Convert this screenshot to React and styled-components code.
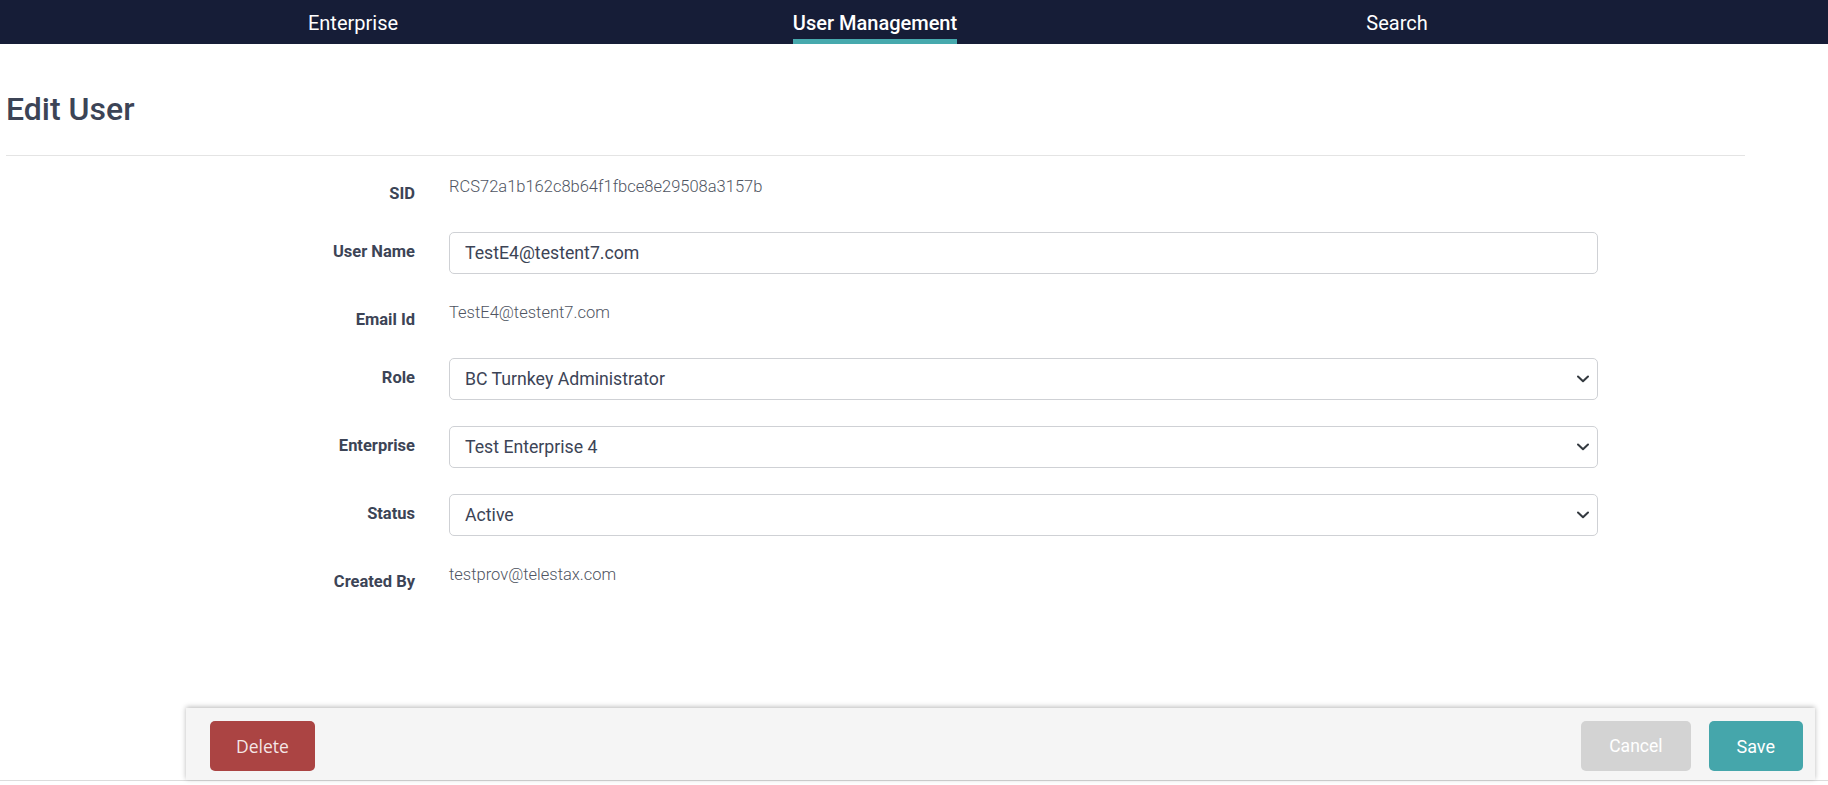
import React from 'react';
import styled, { createGlobalStyle } from 'styled-components';

const GlobalStyle = createGlobalStyle`
  html, body { margin: 0; padding: 0; background: #fff; }
  body { font-family: Roboto, "Liberation Sans", Arial, sans-serif; }
  *, *::before, *::after { box-sizing: border-box; }
`;

const Page = styled.div`
  min-height: 100vh;
  display: flex;
  flex-direction: column;
`;

const NavBar = styled.nav`
  height: 44px;
  background: #161d37;
`;

const NavInner = styled.div`
  width: 1750px;
  height: 100%;
  display: grid;
  grid-template-columns: repeat(3, 522px);
  justify-content: center;
`;

const NavCell = styled.div`
  display: flex;
  justify-content: center;
`;

const NavLink = styled.a`
  display: block;
  height: 44px;
  padding-top: 11px;
  line-height: 24px;
  font-size: 20px;
  font-weight: ${p => (p.$active ? 500 : 400)};
  color: #fff;
  text-decoration: none;
  white-space: nowrap;
  border-bottom: 5px solid ${p => (p.$active ? '#46a9ad' : 'transparent')};
`;

const Main = styled.main`
  margin-left: 6px;
  width: 1739px;
`;

const Title = styled.h1`
  margin: 46px 0 0;
  padding-left: 0;
  font-size: 32px;
  line-height: 38px;
  font-weight: 500;
  color: #3c4456;
`;

const Divider = styled.hr`
  margin: 27px 0 0;
  border: 0;
  border-top: 1px solid #e4e4e4;
`;

const Form = styled.div`
  display: flex;
  flex-direction: column;
  gap: 26px;
  margin-top: 18px;
`;

const Row = styled.div`
  display: grid;
  grid-template-columns: 409px 1149px;
  column-gap: 34px;
  min-height: ${p => (p.$static ? 32 : 42)}px;
`;

const Label = styled.label`
  text-align: right;
  font-weight: 700;
  font-size: 16.5px;
  line-height: 20px;
  padding-top: 10px;
  color: #3c4456;
`;

const StaticValue = styled.div`
  font-size: 16.5px;
  line-height: 20px;
  padding-top: 3px;
  font-weight: 300;
  color: #4f5562;
`;

const fieldBase = `
  height: 42px;
  width: 100%;
  border: 1px solid #cfd1d5;
  border-radius: 5px;
  background: #fff;
  font-family: Roboto, "Liberation Sans", Arial, sans-serif;
  font-size: 17.7px;
  font-weight: 400;
  color: #3c4456;
`;

const TextInput = styled.input`
  ${fieldBase}
  padding: 0 15px;
  outline: none;
`;

const SelectBox = styled.div`
  ${fieldBase}
  display: flex;
  align-items: center;
  justify-content: space-between;
  padding: 0 8px 0 15px;
  cursor: pointer;
`;

const Chevron = () => (
  <svg width="12" height="8" viewBox="0 0 12 8" aria-hidden="true">
    <path d="M1 1.5 L6 6.3 L11 1.5" fill="none" stroke="#343a40" strokeWidth="2" strokeLinecap="round" strokeLinejoin="round" />
  </svg>
);

const FooterWrap = styled.footer`
  margin-top: auto;
  padding-bottom: 4px;
`;

const FooterBase = styled.div`
  border-bottom: 1px solid #dcdcdc;
`;

const ActionBar = styled.div`
  margin: 0 13px 0 186px;
  height: 72px;
  background: #f5f5f5;
  box-shadow: 0 -1px 5px rgba(0, 0, 0, 0.28);
  display: flex;
  align-items: flex-start;
  justify-content: space-between;
  padding: 13px 12px 0 24px;
`;

const ButtonGroup = styled.div`
  display: flex;
  gap: 18px;
`;

const Button = styled.button`
  height: 50px;
  padding: 0 ${p => p.$pad || '28px'};
  border: 0;
  border-radius: 5px;
  cursor: pointer;
  background: ${p => p.$bg};
  color: ${p => p.$color || '#fff'};
  font-family: ${p => p.$font || 'Roboto, "Liberation Sans", Arial, sans-serif'};
  font-size: ${p => p.$size || '18px'};
  font-weight: 400;
`;

const rows = [
  { label: 'SID', type: 'static', value: 'RCS72a1b162c8b64f1fbce8e29508a3157b' },
  { label: 'User Name', type: 'input', value: 'TestE4@testent7.com' },
  { label: 'Email Id', type: 'static', value: 'TestE4@testent7.com' },
  { label: 'Role', type: 'select', value: 'BC Turnkey Administrator' },
  { label: 'Enterprise', type: 'select', value: 'Test Enterprise 4' },
  { label: 'Status', type: 'select', value: 'Active' },
  { label: 'Created By', type: 'static', value: 'testprov@telestax.com' },
];

export default function App() {
  return (
    <Page>
      <GlobalStyle />
      <NavBar>
        <NavInner>
          <NavCell><NavLink href="#">Enterprise</NavLink></NavCell>
          <NavCell><NavLink href="#" $active>User Management</NavLink></NavCell>
          <NavCell><NavLink href="#">Search</NavLink></NavCell>
        </NavInner>
      </NavBar>
      <Main>
        <Title>Edit User</Title>
        <Divider />
        <Form>
          {rows.map(r => (
            <Row key={r.label} $static={r.type === 'static'}>
              <Label>{r.label}</Label>
              {r.type === 'static' && <StaticValue>{r.value}</StaticValue>}
              {r.type === 'input' && <TextInput defaultValue={r.value} />}
              {r.type === 'select' && (
                <SelectBox role="combobox">
                  <span>{r.value}</span>
                  <Chevron />
                </SelectBox>
              )}
            </Row>
          ))}
        </Form>
      </Main>
      <FooterWrap>
        <FooterBase>
          <ActionBar>
            <Button $bg="#ab4443" $pad="26px" $color="rgba(255,255,255,0.88)" $font='"Open Sans", "Liberation Sans", sans-serif' $size="17.5px">Delete</Button>
            <ButtonGroup>
              <Button $bg="#d3d3d3" $size="17.5px">Cancel</Button>
              <Button $bg="#45a6ab">Save</Button>
            </ButtonGroup>
          </ActionBar>
        </FooterBase>
      </FooterWrap>
    </Page>
  );
}
